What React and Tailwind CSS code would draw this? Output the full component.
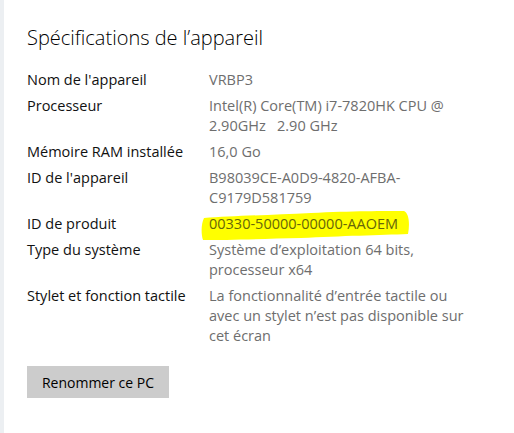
import React from 'react'

const specs = [
  { label: 'Nom de l\'appareil', value: ['VRBP3'] },
  { label: 'Processeur', value: ['Intel(R) Core(TM) i7-7820HK CPU @', '2.90GHz   2.90 GHz'] },
  { label: 'Mémoire RAM installée', value: ['16,0 Go'] },
  { label: 'ID de l\'appareil', value: ['B98039CE-A0D9-4820-AFBA-', 'C9179D581759'] },
  { label: 'ID de produit', value: ['00330-50000-00000-AAOEM'], marked: true },
  { label: 'Type du système', value: ['Système d’exploitation 64 bits,', 'processeur x64'] },
  {
    label: 'Stylet et fonction tactile',
    value: ['La fonctionnalité d’entrée tactile ou', 'avec un stylet n’est pas disponible sur', 'cet écran'],
  },
]

// yellow marker stroke drawn over the product id
const Highlight = () => (
  <svg
    className="absolute -left-[8px] -top-[4px] w-[210px] h-[31px]"
    viewBox="0 0 210 31"
    preserveAspectRatio="none"
  >
    <path
      d="M3 8 C 30 6, 70 5, 110 3 C 150 1, 185 1, 203 1 C 208 3, 209 14, 207 24 C 180 25, 140 26, 100 28 C 60 29, 25 30, 2 30 C 0 24, 0 14, 3 8 Z"
      fill="#ffff00"
    />
  </svg>
)

const SpecRow = ({ item }) => (
  <div className="grid grid-cols-[182px_1fr]">
    <div className="text-[#111111]">{item.label}</div>
    <div className={item.marked ? 'text-[#66660a]' : 'text-[#6e6e6e]'}>
      {item.marked ? (
        <span className="relative inline-block">
          <Highlight />
          <span className="relative">{item.value[0]}</span>
        </span>
      ) : (
        item.value.map((line, i) => (
          <div key={i} className="whitespace-pre">{line}</div>
        ))
      )}
    </div>
  </div>
)

export default function App() {
  return (
    <div
      className="w-[514px] h-[433px] bg-white flex overflow-hidden"
      style={{ fontFamily: '"Open Sans", "Noto Sans", sans-serif' }}
    >
      <div className="w-[4px] shrink-0 bg-[#eceff2]" />
      <div className="flex-1 pl-[23px] pt-[24px]">
        <h1 className="text-[20px] leading-[28px] font-light text-black">Spécifications de l’appareil</h1>

        <div className="mt-[18px] flex flex-col gap-[6px] text-[14.5px] leading-[20px]">
          {specs.map((item, i) => (
            <SpecRow key={i} item={item} />
          ))}
        </div>

        <button className="mt-[20px] w-[142px] h-[32px] bg-[#cccccc] text-[14px] text-black">
          Renommer ce PC
        </button>
      </div>
    </div>
  )
}
